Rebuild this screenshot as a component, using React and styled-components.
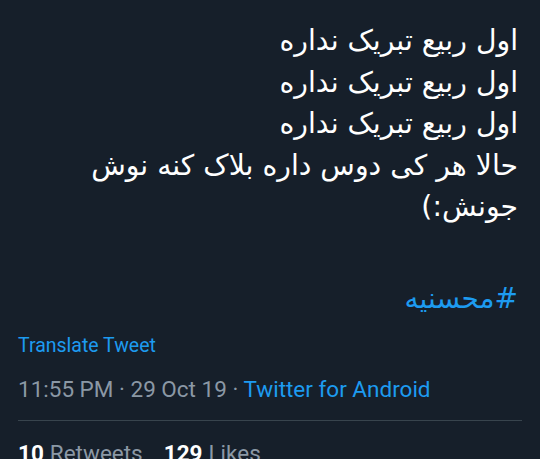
import React from 'react';
import styled, { createGlobalStyle } from 'styled-components';

const Global = createGlobalStyle`
body {
    margin: 0;
    background-color: #161f2a;
    font-family: Roboto, 'Liberation Sans', sans-serif;
}
`

const Page = styled.div`
width: 540px;
height: 459px;
overflow: hidden;
background-color: #161f2a;
display: flex;
flex-direction: column;
`

const TopEdge = styled.div`
width: 22px;
height: 2px;
margin-left: 46px;
border-radius: 0 0 3px 3px;
background: linear-gradient(90deg, #4a5562, #c9ced4, #4a5562);
`

const Body = styled.div`
padding: 20px 22px 0 18px;
display: flex;
flex-direction: column;
`

const TweetText = styled.p`
direction: rtl;
margin: 0;
font-family: 'DejaVu Sans', sans-serif;
font-size: 28.3px;
line-height: 41.5px;
color: #ffffff;
`

const Hashtag = styled.a`
direction: rtl;
display: block;
margin-top: 50px;
font-family: 'DejaVu Sans', sans-serif;
font-size: 28px;
line-height: 41px;
color: #1d9bf0;
text-decoration: none;
`

const Translate = styled.div`
margin-top: 14px;
font-size: 19.5px;
line-height: 26px;
color: #1d9bf0;
`

const Meta = styled.div`
margin-top: 16px;
font-size: 22.5px;
line-height: 28px;
color: #8b98a5;
span {
    color: #1d9bf0;
}
`

const Divider = styled.div`
height: 1px;
margin-top: 17px;
margin-right: -4px;
background-color: #38444d;
`

const Stats = styled.div`
margin-top: 18px;
display: flex;
gap: 21px;
font-size: 22.5px;
line-height: 28px;
color: #8b98a5;
`

const Stat = styled.div`
b {
    color: #ffffff;
    font-weight: 700;
    margin-right: 6px;
}
`

function App() {
    return(
        <Page>
            <Global />
            <TopEdge />
            <Body>
                <TweetText>
                    اول ربیع تبریک نداره<br/>
                    اول ربیع تبریک نداره<br/>
                    اول ربیع تبریک نداره<br/>
                    حالا هر کی دوس داره بلاک کنه نوش جونش:)
                </TweetText>
                <Hashtag>#محسنیه</Hashtag>
                <Translate>Translate Tweet</Translate>
                <Meta>11:55 PM · 29 Oct 19 · <span>Twitter for Android</span></Meta>
                <Divider />
                <Stats>
                    <Stat><b>10</b>Retweets</Stat>
                    <Stat><b>129</b>Likes</Stat>
                </Stats>
            </Body>
        </Page>
    );
}

export default App
